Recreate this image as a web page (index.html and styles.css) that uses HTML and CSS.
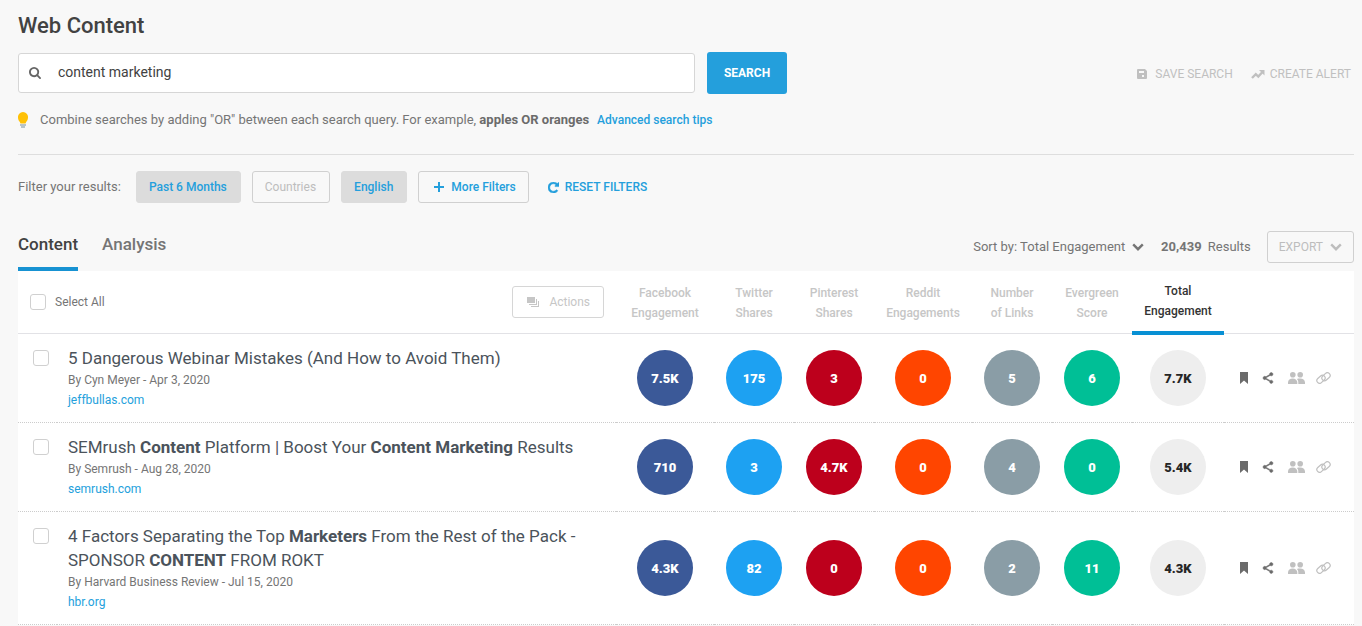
FILE: index.html
```html
<!DOCTYPE html>
<html lang="en">
<head>
<meta charset="utf-8">
<title>Web Content</title>
<link rel="stylesheet" href="styles.css">
</head>
<body>
<svg class="sprite" aria-hidden="true">
  <symbol id="chevron" viewBox="0 0 12 8"><path d="M1.2 1.4 6 6.2l4.800-4.800" fill="none" stroke="currentColor" stroke-width="2.400"/></symbol>
  <symbol id="bookmark" viewBox="0 0 8 12"><path d="M0 0h8v12L4 8.500 0 12z"/></symbol>
  <symbol id="share" viewBox="2 1 20 22"><path d="M18 16.080c-.76 0-1.440.3-1.960.77L8.910 12.700c.05-.23.09-.46.09-.7s-.04-.47-.09-.7l7.050-4.110c.54.5 1.250.81 2.040.81 1.660 0 3-1.340 3-3s-1.340-3-3-3-3 1.340-3 3c0 .24.04.47.09.7L8.040 9.810C7.500 9.310 6.790 9 6 9c-1.660 0-3 1.340-3 3s1.340 3 3 3c.79 0 1.500-.31 2.040-.81l7.120 4.160c-.05.21-.08.43-.08.65 0 1.610 1.310 2.920 2.920 2.920s2.920-1.310 2.920-2.920-1.310-2.920-2.920-2.920z" stroke="currentColor" stroke-width="1"/></symbol>
  <symbol id="people" viewBox="0 0 17 12"><circle cx="4.800" cy="2.800" r="2.800"/><circle cx="12.200" cy="2.800" r="2.800"/><path d="M0 12v-1.500C0 8 2.200 6.500 4.800 6.500c1.300 0 2.300.3 3 .9 1 .8 1.500 2 1.500 3.100V12z"/><path d="M10.300 12v-1.500c0-1.400-.5-2.600-1.400-3.500.8-.4 2-.5 3.300-.5 2.600 0 4.800 1.500 4.800 4V12z"/></symbol>
  <symbol id="link" viewBox="0 0 15 12"><g fill="none" stroke="currentColor" stroke-width="1.200"><rect x="-4.600" y="-2.700" width="9.200" height="5.400" rx="2.700" transform="translate(5 7.300) rotate(-42)"/><rect x="-4.600" y="-2.700" width="9.200" height="5.400" rx="2.700" transform="translate(10 4.700) rotate(-42)"/></g></symbol>
</svg>

<main class="page">
  <h1 class="page-title">Web Content</h1>

  <div class="search-row">
    <form class="search-form">
      <div class="search-box">
        <svg class="search-icon" viewBox="64 128 1664 1664" aria-hidden="true"><path d="M1216 832q0-185-131.500-316.500t-316.500-131.500-316.500 131.500-131.500 316.500 131.500 316.500 316.500 131.500 316.500-131.500 131.500-316.500zm512 832q0 52-38 90t-90 38q-54 0-90-38l-343-342q-179 124-399 124-143 0-273.500-55.500t-225-150-150-225-55.500-273.500 55.500-273.500 150-225 225-150 273.500-55.500 273.500 55.500 225 150 150 225 55.500 273.500q0 220-124 399l343 343q37 37 37 90z"/></svg>
        <input class="search-input" type="text" aria-label="Search query" value="content marketing">
      </div>
      <button class="search-button" type="button">SEARCH</button>
    </form>
    <div class="search-actions">
      <button class="text-button" type="button"><svg class="icon-save" viewBox="0 0 10 10" aria-hidden="true"><path fill-rule="evenodd" d="M1 0h7l2 2v7a1 1 0 0 1-1 1H1a1 1 0 0 1-1-1V1a1 1 0 0 1 1-1zm1 2v2h5V2zm3 4v2h2V6z"/></svg>SAVE SEARCH</button>
      <button class="text-button text-button-alert" type="button"><svg class="icon-trend" viewBox="0 0 14 10" aria-hidden="true"><path d="m1 9 3.800-3.800 2.500 2.400L11.500 3" fill="none" stroke="currentColor" stroke-width="2.400"/><path d="M8 1h5.500v5.500z"/></svg>CREATE ALERT</button>
    </div>
  </div>

  <p class="hint">
    <svg class="icon-bulb" viewBox="0 0 10 16" aria-hidden="true"><path fill="#ffc107" d="M5 0a5 5 0 0 1 5 5.500c0 2-.8 3.200-1.700 4.300L7.500 11.500h-5L1.700 9.800C.8 8.700 0 7.500 0 5.500A5 5 0 0 1 5 0z"/><path fill="#78909c" d="M2 12.500h6v1H2zM3 14.500h4v1H3z"/></svg>
    <span>Combine searches by adding "OR" between each search query. For example, <strong>apples OR oranges</strong></span>
    <a class="hint-link" href="#tips">Advanced search tips</a>
  </p>

  <div class="filters">
    <span class="filters-label">Filter your results:</span>
    <button class="filter filter-on" type="button">Past 6 Months</button>
    <button class="filter filter-off" type="button">Countries</button>
    <button class="filter filter-on" type="button">English</button>
    <button class="filter filter-more" type="button"><svg class="icon-plus" viewBox="0 0 10 10" aria-hidden="true"><path d="M4 0h2v4h4v2H6v4H4V6H0V4h4z"/></svg>More Filters</button>
    <button class="reset" type="button"><svg class="icon-reset" viewBox="128 128 1536 1536" aria-hidden="true"><path stroke="currentColor" stroke-width="70" d="M1664 256v448q0 26-19 45t-45 19h-448q-42 0-59-40-17-39 14-69l138-138q-148-137-349-137-104 0-198.500 40.500t-163.500 109.500-109.500 163.500-40.500 198.500 40.500 198.500 109.500 163.500 163.500 109.500 198.500 40.500q119 0 225-52t179-147q7-10 23-12 15 0 25 9l137 138q9 8 9.500 20.500t-7.500 22.500q-109 132-264 204.500t-327 72.500q-156 0-298-61t-245-164-164-245-61-298 61-298 164-245 245-164 298-61q147 0 284.500 55.500t244.500 156.500l130-129q29-31 70-14 39 17 39 59z"/></svg>RESET FILTERS</button>
  </div>

  <div class="toolbar">
    <nav class="tabs">
      <a class="tab tab-active" href="#content">Content</a>
      <a class="tab" href="#analysis">Analysis</a>
    </nav>
    <div class="toolbar-right">
      <div class="sort">
        <label for="sort">Sort by:</label>
        <select class="sort-select" id="sort"><option>Total Engagement</option></select>
        <svg class="chevron" aria-hidden="true"><use href="#chevron"/></svg>
      </div>
      <div class="count"><strong>20,439</strong> Results</div>
      <button class="export" type="button">EXPORT<svg class="chevron" aria-hidden="true"><use href="#chevron"/></svg></button>
    </div>
  </div>

  <table class="results">
    <colgroup>
      <col class="col-check"><col><col class="col-wide"><col class="col-narrow"><col class="col-narrow"><col class="col-wide"><col class="col-narrow"><col class="col-narrow"><col class="col-total"><col class="col-actions">
    </colgroup>
    <thead>
      <tr>
        <th class="head-main" colspan="2">
          <div class="head-bar">
            <label class="select-all"><input class="check" type="checkbox">Select All</label>
            <button class="actions-button" type="button"><svg class="icon-stack" viewBox="0 0 12 10" aria-hidden="true"><path d="M0 0h8v6H0zM9 2h1v6H2V7h7zM11 4h1v6H4V9h7z"/></svg>Actions</button>
          </div>
        </th>
        <th>Facebook<br>Engagement</th>
        <th>Twitter<br>Shares</th>
        <th>Pinterest<br>Shares</th>
        <th>Reddit<br>Engagements</th>
        <th>Number<br>of Links</th>
        <th>Evergreen<br>Score</th>
        <th class="sorted">Total<br>Engagement</th>
        <th></th>
      </tr>
    </thead>
    <tbody>
      <tr>
        <td class="cell-check"><input class="check" type="checkbox" aria-label="Select article 1"></td>
        <td class="cell-main"><h2 class="title">5 Dangerous Webinar Mistakes (And How to Avoid Them)</h2><div class="byline">By Cyn Meyer - Apr 3, 2020</div><a class="domain" href="#jeffbullas">jeffbullas.com</a></td>
        <td><span class="bubble facebook">7.5K</span></td>
        <td><span class="bubble twitter">175</span></td>
        <td><span class="bubble pinterest">3</span></td>
        <td><span class="bubble reddit">0</span></td>
        <td><span class="bubble links">5</span></td>
        <td><span class="bubble evergreen">6</span></td>
        <td><span class="bubble total">7.7K</span></td>
        <td><div class="row-actions"><button class="icon-button" type="button" aria-label="Bookmark"><svg class="icon-bookmark"><use href="#bookmark"/></svg></button><button class="icon-button" type="button" aria-label="Share"><svg class="icon-share"><use href="#share"/></svg></button><button class="icon-button muted" type="button" aria-label="Sharers"><svg class="icon-people"><use href="#people"/></svg></button><button class="icon-button muted" type="button" aria-label="Backlinks"><svg class="icon-link"><use href="#link"/></svg></button></div></td>
      </tr>
      <tr>
        <td class="cell-check"><input class="check" type="checkbox" aria-label="Select article 2"></td>
        <td class="cell-main"><h2 class="title">SEMrush <b>Content</b> Platform | Boost Your <b>Content Marketing</b> Results</h2><div class="byline">By Semrush - Aug 28, 2020</div><a class="domain" href="#semrush">semrush.com</a></td>
        <td><span class="bubble facebook">710</span></td>
        <td><span class="bubble twitter">3</span></td>
        <td><span class="bubble pinterest">4.7K</span></td>
        <td><span class="bubble reddit">0</span></td>
        <td><span class="bubble links">4</span></td>
        <td><span class="bubble evergreen">0</span></td>
        <td><span class="bubble total">5.4K</span></td>
        <td><div class="row-actions"><button class="icon-button" type="button" aria-label="Bookmark"><svg class="icon-bookmark"><use href="#bookmark"/></svg></button><button class="icon-button" type="button" aria-label="Share"><svg class="icon-share"><use href="#share"/></svg></button><button class="icon-button muted" type="button" aria-label="Sharers"><svg class="icon-people"><use href="#people"/></svg></button><button class="icon-button muted" type="button" aria-label="Backlinks"><svg class="icon-link"><use href="#link"/></svg></button></div></td>
      </tr>
      <tr>
        <td class="cell-check"><input class="check" type="checkbox" aria-label="Select article 3"></td>
        <td class="cell-main"><h2 class="title">4 Factors Separating the Top <b>Marketers</b> From the Rest of the Pack - SPONSOR <b>CONTENT</b> FROM ROKT</h2><div class="byline">By Harvard Business Review - Jul 15, 2020</div><a class="domain" href="#hbr">hbr.org</a></td>
        <td><span class="bubble facebook">4.3K</span></td>
        <td><span class="bubble twitter">82</span></td>
        <td><span class="bubble pinterest">0</span></td>
        <td><span class="bubble reddit">0</span></td>
        <td><span class="bubble links">2</span></td>
        <td><span class="bubble evergreen">11</span></td>
        <td><span class="bubble total">4.3K</span></td>
        <td><div class="row-actions"><button class="icon-button" type="button" aria-label="Bookmark"><svg class="icon-bookmark"><use href="#bookmark"/></svg></button><button class="icon-button" type="button" aria-label="Share"><svg class="icon-share"><use href="#share"/></svg></button><button class="icon-button muted" type="button" aria-label="Sharers"><svg class="icon-people"><use href="#people"/></svg></button><button class="icon-button muted" type="button" aria-label="Backlinks"><svg class="icon-link"><use href="#link"/></svg></button></div></td>
      </tr>
    </tbody>
  </table>
</main>
</body>
</html>
```
FILE: styles.css
```css
* { box-sizing: border-box; }

body {
  margin: 0;
  background: #f8f8f8;
  color: #757575;
  font: 13px/20px Roboto, "Liberation Sans", sans-serif;
}

button, input, select { font: inherit; color: inherit; margin: 0; }
button { cursor: pointer; padding: 0; border: 0; background: none; }
a { text-decoration: none; }
svg { display: block; flex: none; fill: currentColor; }
.sprite { position: absolute; width: 0; height: 0; }

.page { padding: 8px 8px 0 18px; }

.page-title {
  margin: 0;
  font-size: 22px;
  line-height: 36px;
  font-weight: 500;
  color: #424242;
}

/* Search */
.search-row { display: flex; align-items: center; justify-content: space-between; gap: 24px; margin-top: 8px; }
.search-form { display: flex; align-items: center; gap: 12px; flex: 0 1 769px; }
.search-box {
  display: flex;
  align-items: center;
  gap: 17px;
  flex: 1;
  height: 40px;
  padding: 0 10px;
  background: #fff;
  border: 1px solid #d6d6d6;
  border-radius: 3px;
}
.search-icon { width: 12px; height: 12px; color: #666; }
.search-input {
  flex: 1;
  min-width: 0;
  padding: 0 0 2px;
  border: 0;
  outline: 0;
  background: none;
  font-size: 14px;
  color: #424242;
}
.search-button {
  width: 80px;
  height: 42px;
  border-radius: 3px;
  background: #249fdc;
  color: #fff;
  font-size: 12px;
  font-weight: 700;
}
.search-actions { display: flex; gap: 18px; padding: 2px 3px 0 0; }
.text-button { display: flex; align-items: center; gap: 8px; color: #c0c0c0; font-size: 12px; }
.text-button-alert { gap: 5px; }
.icon-save { width: 10px; height: 10px; }
.icon-trend { width: 14px; height: 10px; }

/* Hint */
.hint {
  display: flex;
  align-items: center;
  margin: 0;
  padding: 16px 0 24px;
  border-bottom: 1px solid #dedede;
}
.hint strong { font-weight: 700; color: #6b6b6b; }
.icon-bulb { width: 10px; height: 16px; margin-right: 12px; }
.hint-link { margin-left: 8px; font-size: 12px; font-weight: 500; color: #249fdc; }

/* Filters */
.filters { display: flex; align-items: center; gap: 11px; padding: 16px 0 28px; }
.filters-label { margin-right: 4px; }
.filter {
  display: flex;
  align-items: center;
  gap: 7px;
  height: 32px;
  padding: 0 13px 0 12px;
  border: 1px solid #d0d0d0;
  border-radius: 3px;
  font-size: 12px;
  font-weight: 500;
  color: #249fdc;
}
.filter-on { background: #dcdcdc; border-color: #dcdcdc; }
.filter-off { color: #bdbdbd; font-weight: 400; }
.filter-more { padding: 0 12px 0 15px; }
.icon-plus { width: 10px; height: 10px; }
.reset { display: flex; align-items: center; gap: 6px; margin-left: 8px; font-size: 12px; font-weight: 500; color: #249fdc; }
.icon-reset { width: 11px; height: 11px; }

/* Tabs and sorting */
.toolbar { display: flex; justify-content: space-between; }
.tabs { display: flex; gap: 24px; }
.tab { height: 40px; font-size: 17px; line-height: 26px; font-weight: 500; color: #757575; }
.tab-active { border-bottom: 4px solid #1792d2; color: #424242; }
.toolbar-right { display: flex; align-items: center; height: 32px; }
.sort { display: flex; align-items: center; gap: 3px; }
.sort-select { appearance: none; padding: 0; border: 0; background: none; }
.sort .chevron { margin-left: 3px; }
.chevron { width: 12px; height: 8px; }
.count { margin: 0 16px 0 17px; }
.count strong { margin-right: 3px; font-weight: 700; }
.export {
  display: flex;
  align-items: center;
  gap: 7px;
  height: 32px;
  padding: 0 11px;
  border: 1px solid #d0d0d0;
  border-radius: 3px;
  font-size: 12px;
  color: #bdbdbd;
}

/* Results table */
.results { width: 100%; table-layout: fixed; border-spacing: 0; background: #fff; }
.col-check { width: 39px; }
.col-wide { width: 98px; }
.col-narrow { width: 80px; }
.col-total { width: 92px; }
.col-actions { width: 130px; }

.results th {
  position: relative;
  padding: 12px 0 10px;
  border-bottom: 1px solid #e2e2e6;
  font-size: 12px;
  font-weight: 500;
  color: #c6c6c6;
}
.results .head-main { padding: 0 12px; }
.head-bar { display: flex; align-items: center; justify-content: space-between; }
.select-all { display: flex; align-items: center; gap: 9px; font-weight: 400; color: #757575; }
.check {
  appearance: none;
  display: block;
  width: 16px;
  height: 16px;
  border: 1px solid #d0d0d0;
  border-radius: 3px;
  background: #fff;
}
.actions-button {
  display: flex;
  align-items: center;
  gap: 10px;
  height: 32px;
  padding: 0 13px 0 14px;
  border: 1px solid #d6d6d6;
  border-radius: 3px;
  font-weight: 400;
  color: #c6c6c6;
}
.icon-stack { width: 12px; height: 10px; }
.results .sorted { padding: 10px 0 12px; color: #333; }
.sorted::after {
  content: "";
  position: absolute;
  left: 0;
  right: 0;
  bottom: -2px;
  height: 4px;
  background: #0890d4;
}

.results td { padding: 12px 0; border-bottom: 1px dotted #ccc; }
.results .cell-check { padding: 16px 0 0 15px; vertical-align: top; }
.results .cell-main { padding: 12px 11px; }
.title { margin: 0; font-size: 17px; line-height: 24px; font-weight: 400; color: #4b535b; }
.title b { font-weight: 700; }
.byline { font-size: 12px; }
.domain { display: block; font-size: 12px; color: #249fdc; }

.bubble {
  display: flex;
  align-items: center;
  justify-content: center;
  width: 56px;
  height: 56px;
  margin: 0 auto;
  padding-top: 1px;
  border-radius: 50%;
  color: #fff;
  font-weight: 900;
}
.facebook { background: #3b5998; }
.twitter { background: #1da1f2; }
.pinterest { background: #bd001c; }
.reddit { background: #ff4500; }
.links { background: #8a9da6; }
.evergreen { background: #00bf96; }
.total { background: #eee; color: #262626; }

.row-actions { display: flex; align-items: center; gap: 14px; padding-left: 16px; }
.icon-button { color: #6b6b6b; }
.muted { color: #c0c0c0; }
.muted + .muted { margin-left: -3px; }
.icon-bookmark { width: 8px; height: 12px; }
.icon-share { width: 12px; height: 12px; }
.icon-people { width: 17px; height: 12px; }
.icon-link { width: 15px; height: 12px; }
```
